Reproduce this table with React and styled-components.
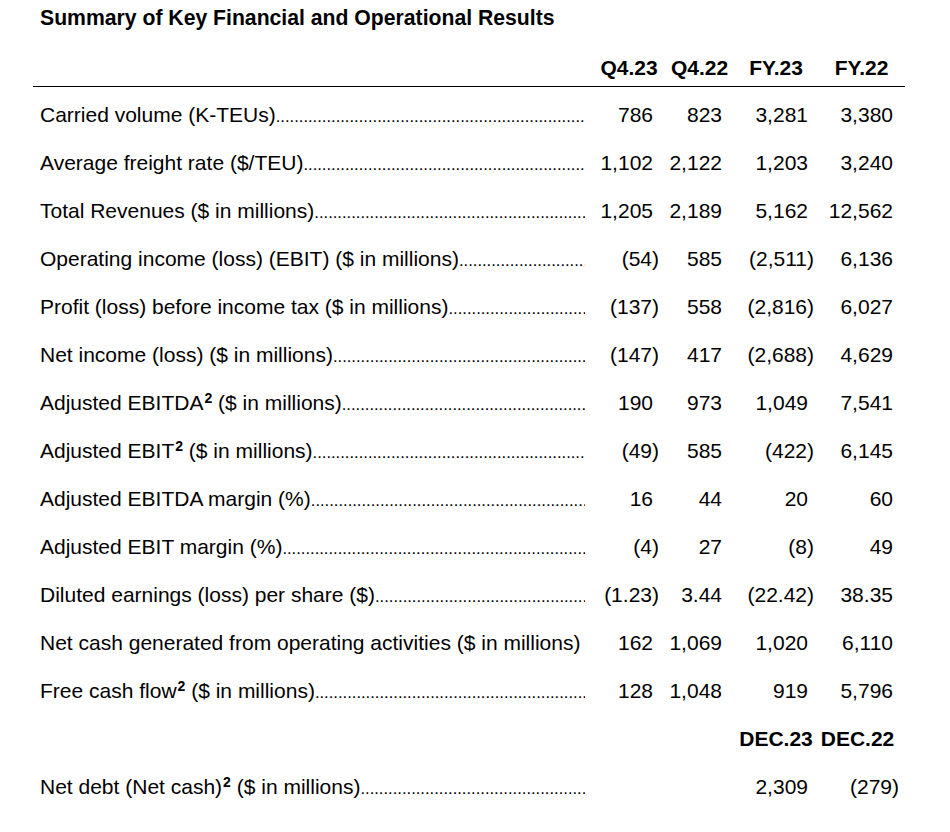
import React from 'react';
import styled, { createGlobalStyle } from 'styled-components';

const GlobalStyle = createGlobalStyle`
	body {
		margin: 0;
		background: #ffffff;
		color: #000000;
		font-family: 'Liberation Sans', Arial, Helvetica, sans-serif;
	}
`;

const Page = styled.div`
	width: 950px;
	padding: 6px 45px 20px 33px;
	box-sizing: border-box;
`;

const Title = styled.h1`
	margin: 0 0 26px 7px;
	font-size: 21.2px;
	line-height: 24px;
	font-weight: 700;
`;

const Table = styled.div`
	display: flex;
	flex-direction: column;
	width: 872px;
`;

const Row = styled.div`
	display: grid;
	grid-template-columns: 550px 70px 69px 86px 85px;
	padding: 0 5px 0 7px;
	height: 48px;
	align-items: baseline;
	line-height: 48px;
	font-size: 21px;
`;

const HeadRow = styled(Row)`
	height: 30px;
	line-height: 24px;
	border-bottom: 1px solid #000;
	margin-bottom: 4px;
`;

const HeadCell = styled.div`
	font-weight: 700;
	white-space: nowrap;
	text-align: center;
	padding-left: ${(p) => (p.$shift === undefined ? 8 : p.$shift)}px;
`;

const Label = styled.div`
	display: flex;
	align-items: baseline;
	white-space: nowrap;
	padding-right: 5px;
	overflow: ${(p) => (p.$plain ? 'visible' : 'hidden')};
`;

const Dots = styled.span`
	flex: 1;
	overflow: hidden;
	white-space: nowrap;
	font-size: 16.6px;
	&::after {
		content: '................................................................................................................................................................................................';
	}
`;

const Sup = styled.sup`
	font-size: 14px;
	font-weight: 700;
	line-height: 0;
	vertical-align: 7px;
	margin-left: 1px;
`;

const Value = styled.div`
	text-align: right;
	padding-right: 7px;
	white-space: nowrap;
`;

const Paren = styled.span`
	margin-right: -6px;
`;

const Blank = styled.div``;

const rows = [
	{ label: 'Carried volume (K-TEUs)', v: ['786', '823', '3,281', '3,380'] },
	{ label: 'Average freight rate ($/TEU)', v: ['1,102', '2,122', '1,203', '3,240'] },
	{ label: 'Total Revenues ($ in millions)', v: ['1,205', '2,189', '5,162', '12,562'] },
	{ label: 'Operating income (loss) (EBIT) ($ in millions)', v: ['(54)', '585', '(2,511)', '6,136'] },
	{ label: 'Profit (loss) before income tax ($ in millions)', v: ['(137)', '558', '(2,816)', '6,027'] },
	{ label: 'Net income (loss) ($ in millions)', v: ['(147)', '417', '(2,688)', '4,629'] },
	{ label: 'Adjusted EBITDA', sup: true, rest: ' ($ in millions)', v: ['190', '973', '1,049', '7,541'] },
	{ label: 'Adjusted EBIT', sup: true, rest: ' ($ in millions)', v: ['(49)', '585', '(422)', '6,145'] },
	{ label: 'Adjusted EBITDA margin (%)', v: ['16', '44', '20', '60'] },
	{ label: 'Adjusted EBIT margin (%)', v: ['(4)', '27', '(8)', '49'] },
	{ label: 'Diluted earnings (loss) per share ($)', v: ['(1.23)', '3.44', '(22.42)', '38.35'] },
	{ label: 'Net cash generated from operating activities ($ in millions)', plain: true, v: ['162', '1,069', '1,020', '6,110'] },
	{ label: 'Free cash flow', sup: true, rest: ' ($ in millions)', v: ['128', '1,048', '919', '5,796'] },
];

function Num({ text }) {
	if (!text) return <Blank />;
	if (text.endsWith(')')) {
		return (
			<Value>
				{text.slice(0, -1)}
				<Paren>)</Paren>
			</Value>
		);
	}
	return <Value>{text}</Value>;
}

function DataRow({ row }) {
	return (
		<Row>
			<Label $plain={row.plain}>
				<span>
					{row.label}
					{row.sup && <Sup>2</Sup>}
					{row.rest}
				</span>
				{!row.plain && <Dots />}
			</Label>
			{row.v.map((val, i) => (
				<Num key={i} text={val} />
			))}
		</Row>
	);
}

export default function App() {
	return (
		<Page>
			<GlobalStyle />
			<Title>Summary of Key Financial and Operational Results</Title>
			<Table>
				<HeadRow>
					<Blank />
					<HeadCell>Q4.23</HeadCell>
					<HeadCell $shift={10}>Q4.22</HeadCell>
					<HeadCell>FY.23</HeadCell>
					<HeadCell>FY.22</HeadCell>
				</HeadRow>
				{rows.map((row) => (
					<DataRow key={row.label} row={row} />
				))}
				<Row>
					<Blank />
					<Blank />
					<Blank />
					<HeadCell>DEC.23</HeadCell>
					<HeadCell $shift={0}>DEC.22</HeadCell>
				</Row>
				<DataRow row={{ label: 'Net debt (Net cash)', sup: true, rest: ' ($ in millions)', v: ['', '', '2,309', '(279)'] }} />
			</Table>
		</Page>
	);
}
